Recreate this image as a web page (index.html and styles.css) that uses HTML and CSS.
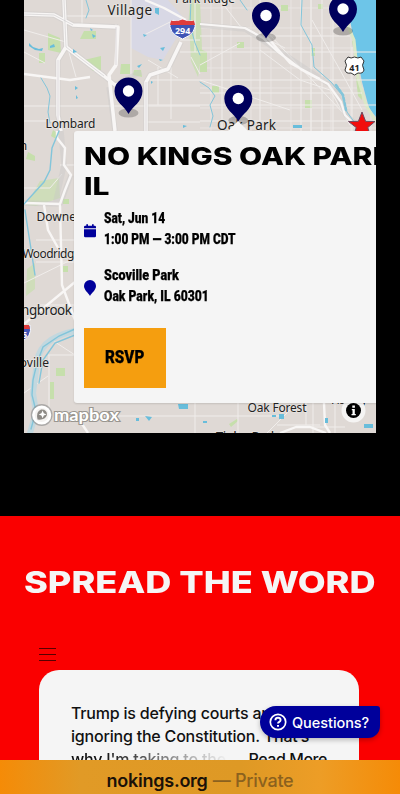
FILE: index.html
```html
<!DOCTYPE html>
<html lang="en">
<head>
<meta charset="utf-8">
<meta name="viewport" content="width=device-width, initial-scale=1">
<title>No Kings</title>
<link rel="stylesheet" href="styles.css">
</head>
<body>
<div class="screen">
  <section class="map-section">
    <div class="map">
      <svg class="map-canvas" viewBox="24 0 352 433" width="352" height="433">
        <defs>
          <g id="pin">
            <ellipse cx="0" cy="-1" rx="10" ry="4.500" fill="#000" opacity=".22"/>
            <path d="M0 0C-4-8-14-12-14-23A14 13.600 0 0 1 14-23C14-12 4-8 0 0Z" fill="#00005c"/>
            <circle cx="0" cy="-23" r="5.700" fill="#fff"/>
          </g>
          <pattern id="streets" width="20" height="20" patternUnits="userSpaceOnUse">
            <path d="M0 8H20M11 0V20" stroke="#ebe7e4" stroke-width=".8" fill="none"/>
          </pattern>
        </defs>
        <rect x="24" width="352" height="433" fill="#dfd9d5"/>
        <rect x="200" width="176" height="131" fill="url(#streets)"/>
        <path d="M131 0H168L188 23 180 32 163 60 148 57 131 48Z" fill="#d8d8e5"/>
        <g fill="#c6dfac">
          <path d="M48 33l12 5 1 15-13-3zM39 53h6v10h-6zM84 31h12v8H80zM84 60l17-4v14l-8 1zM121 64h9v10h-10zM134 70h7l1 7-9-2zM53 130l6 4-3 5-5-3zM28 152l7 4v5l-9-2z"/>
          <path d="M190 0h10l2 49-4 28-7-16-1-20-2-13z" opacity=".75"/>
          <path d="M200 49l7 3v20h-7zM237 42h7v6h-7zM281 5h7v6h-7zM318 4h5v5h-5zM305 100h7v8h-7zM212 86h7v7h-7zM311 48h4v8h-4zM352 41l8 2-1 4-6-1zM356 78l5 2 1 20-4-4zM63 199h6v5h-6zM63 266h5v6h-5zM56 368h9v8h-9zM50 382h4v17h-4zM229 424l8-5 1 2-7 6z"/>
          <path d="M40 181l19-3 1 20-24 8-10-1zM27 269l8-6v26l-9 7z" opacity=".65"/>
        </g>
        <path d="M346 0H376V117L369 108 362 82 356 51Z" fill="#6dc5e8"/>
        <path d="M347 24L354 40 358 78 366 105 376 122" fill="none" stroke="#dbe8c7" stroke-width="3"/>
        <g fill="none" stroke="#f0edeb" stroke-width="1">
          <path d="M24 30L66 42 76 77M24 52L45 63M64 16H130M82 0V24M116 24V68M131 0V100M24 106H200M24 121H75M24 188H50L62 174M60 165H75M38 219H75M36 240H75M36 262H75M38 305H75M48 355H75M49 355V420M158 67V105M171 67V119M147 80H376M144 122H200M147 105H376M148 60L178 78M191 57L200 74M180 40H200M180 52H376M195 0V52M222 0V131M260 0V131M301 0V131M333 0V131M352 47V131M200 65L240 43M200 80L290 110M311 0V131M322 0V131M200 36H350M200 121H376M200 93H362M78 416H220M220 416H280M238 403V433M267 433L294 406M306 403V425M300 427H345M335 403V433M195 403V433M277 425H320M24 283L75 258M24 393L48 376M52 340L75 355M313 403V433M144 35L174 20"/>
          <path d="M312 20L340 70 362 110M260 50L300 80 330 90 350 125M270 35L345 115M220 0L240 26 285 48"/>
        </g>
        <g fill="none" stroke="#c9c7c9" stroke-width="5.400" stroke-linejoin="round" opacity=".4">
          <path d="M64 0L66 47 104 76 115 85 141 72M66 47L58 60 58 115 61 131M146 131V82L150 75 168 69 181 42M109 87L115 131M24 14L54 15 73 25 118 27M200 25L245 29 285 55 335 88 346 115 360 128M24 203L60 204 71 175M61 131L64 165 55 205"/>
        </g>
        <g fill="none" stroke="#f8f6f5" stroke-width="3.500" stroke-linejoin="round">
          <path d="M64 0L66 47 104 76 115 85 120 84M66 47L58 60 58 115 61 131M146 131V82L150 75 168 69 181 42M24 14L54 15 73 25 118 27L116 65 109 75 115 131"/>
          <path d="M24 74L70 80 90 77M186 20L164 8 145 0M24 203L60 204 65 190 71 175 64 165 65 148 57 138V131M60 205L62 285 75 320M44 205L48 230 62 255M24 324L75 282M280 433L296 427 310 427 326 433M80 421L88 433M324 403L325 425 330 433" stroke-width="2.400"/>
          <path d="M200 24L245 28 263 38 277 51 302 70 328 84 341 102 345 115 360 130M267 37L290 63 320 79" stroke-width="2.200"/>
        </g>
        <g fill="none" stroke="#c9c7c9" stroke-width=".7" opacity=".8">
          <path d="M64 0L66 47 104 76M58 60V131M146 131V82M116 27V65M24 14L54 15 73 25"/>
        </g>
        <g fill="none" stroke="#83c5da" stroke-width="1.400" stroke-linecap="round">
          <path d="M86 0L89 10 86 18M41 78L47 88 50 96 48 112 50 123M191 0L190 25 195 43 200 55M302 0L301 25 312 45 314 67 331 82 342 95 347 112 360 130M240 0L247 10M200 82L209 88 215 96 210 105 213 116 210 127" stroke-width="1"/>
          <path d="M59 131L52 148 50 170 44 182 24 204M25 210L28 230 31 249 35 275"/>
          <path d="M75 331Q36 338 36 370L33 393 36 412 30 433" stroke="#c2d8df" stroke-width="6"/>
          <path d="M75 329L59 336 43 347 37 363 33 380 32 395 36 411 31 429M75 335L55 343 43 360 39 383"/>
          <path d="M336 85l7 10 3 15" stroke-dasharray="3 2" stroke-width="2.500"/>
        </g>
        <g fill="#68bddb">
          <path d="M29 43l4 4 6 2 4-1-1 3-7-1-6-4zM50 46l4-2 1 3-5 1zM90 28l3 2-2 1zM92 34l4 2-3 2zM73 49l4 3-4 1zM143 34l4 1-3 2zM160 48l5-1-2 4zM159 59l4 1-3 1zM137 66l5-2-3 4zM75 86l3 2-3 2zM76 95l2 3-2 1zM151 81l2 1-2 2zM183 125l4 1-4 2zM155 8h4v7l-4-2zM293 125h9v3h-9zM178 404h10v5h-9zM145 416l7 1-3 4zM136 418h3v3h-3zM203 421h4v2h-4zM279 414h5v5h-5zM325 418h3v5h-3zM364 424h9v4h-9zM272 415h4v2h-4z"/>
        </g>
        <g class="map-labels">
          <text x="107.500" y="15" textLength="44.500">Village</text>
          <text x="175" y="2.500" textLength="60" class="small">Park Ridge</text>
          <text x="45.500" y="128" textLength="50" class="small">Lombard</text>
          <text x="217" y="130" textLength="59">Oak Park</text>
          <text x="36.500" y="220.500" class="small">Downers</text>
          <text x="22.500" y="258" class="small" textLength="58">Woodridge</text>
          <text x="-1" y="315" textLength="73">Bolingbrook</text>
          <text x="-13" y="367" class="small" textLength="62">Romeoville</text>
          <text x="12.500" y="149.500" class="small">on</text>
          <text x="247.500" y="411.500" class="small" textLength="59">Oak Forest</text>
          <text x="216" y="441.500" textLength="62">Tinley Park</text>
          <text x="331" y="404" class="small" textLength="36">Harvey</text>
        </g>
        <path d="M170.500 21Q176 22 182.500 19.500Q189 22 194.500 21Q198 33 182.500 39Q167 33 170.500 21Z" fill="#4054b5" stroke="#fff" stroke-width="1"/>
        <path d="M171 20.500Q176 22 182.500 19.500Q189 22 194 20.500L195 25H170Z" fill="#df3c3c"/>
        <text x="182.700" y="33.500" class="shield light">294</text>
        <path d="M12 325Q18 327 23 325Q28 327 30 325Q33 337 20 342" fill="#4054b5" stroke="#fff"/>
        <path d="M18 325H29L30 329H18Z" fill="#df3c3c"/>
        <text x="22" y="338" class="shield light">55</text>
        <path d="M348 57Q351 59 354.500 57Q358 59 361 57L364 61Q361 65 364 70Q363 74 358 73L354.500 75L351 73Q346 74 345 70Q348 65 345 61Z" fill="#fff" stroke="#333"/>
        <text x="354.500" y="70.500" class="shield">41</text>
        <path d="M362 112L365.600 121.300 375 121.500 367.800 127.500 370.500 137 362 131.500 353.500 137 356.200 127.500 348.500 121.500 358.400 121.300Z" fill="#f20d0d" stroke="#6c4a61" stroke-width="1"/>
        <use href="#pin" x="128.500" y="114"/>
        <use href="#pin" x="266" y="38.500"/>
        <use href="#pin" x="343" y="32"/>
        <use href="#pin" x="238.300" y="121.500"/>
        <g>
          <circle cx="41.700" cy="415" r="9.400" fill="none" stroke="#888" stroke-width="3" opacity=".6"/>
          <circle cx="41.700" cy="415" r="8.300" fill="#f4f2f0" stroke="#fff" stroke-width="2.600"/>
          <path d="M37.500 419.500Q35.500 412 41 409.500Q47 409 47 415Q45 420.500 37.500 419.500Z" fill="#8d8a85"/>
          <path d="M42.600 410.500l1.200 2.700 2.700 1.200-2.700 1.200-1.200 2.700-1.200-2.700-2.700-1.200 2.700-1.200z" fill="#fff"/>
          <text x="54" y="420.500" class="logo" textLength="65" lengthAdjust="spacingAndGlyphs">mapbox</text>
        </g>
        <circle cx="353.500" cy="410.500" r="12" fill="#f5f4f3"/>
        <circle cx="353.500" cy="410.500" r="7.500" fill="#000"/>
        <path d="M352.300 405.500h2.600v2.300h-2.600zM351.800 409h3v5h1v1.300h-4.300V414h1v-3.700h-.7z" fill="#fff"/>
      </svg>
      <article class="popup">
        <h2><span class="wide">NO KINGS OAK PARK,</span><span class="wide">IL</span></h2>
        <div class="detail">
          <svg class="calendar" width="12" height="14" viewBox="0 0 12 14"><path d="M0 5.200H12V12Q12 13.300 10.700 13.300H1.300Q0 13.300 0 12ZM0 4.300V3Q0 1.800 1.300 1.800H2.300V.3H4V1.800H8V.3H9.700V1.800H10.700Q12 1.800 12 3V4.300Z" fill="#00009b"/></svg>
          <p><span class="narrow">Sat, Jun 14</span><span class="narrow">1:00 PM — 3:00 PM CDT</span></p>
        </div>
        <div class="detail">
          <svg class="place" width="12" height="16" viewBox="0 0 12 16"><path d="M6 16C4.500 13 0 10 0 6A6 6 0 0 1 12 6C12 10 7.500 13 6 16Z" fill="#00009b"/></svg>
          <p><span class="narrow n-place">Scoville Park</span><span class="narrow n-city">Oak Park, IL 60301</span></p>
        </div>
        <a class="rsvp"><span class="narrow">RSVP</span></a>
      </article>
    </div>
  </section>
  <section class="spread">
    <h1><span class="wide">SPREAD THE WORD</span></h1>
    <div class="menu"><i></i><i></i><i></i></div>
    <div class="message">
      <p class="l1">Trump is defying courts and</p>
      <p class="l2">ignoring the Constitution. That’s</p>
      <p class="l3"><span class="fade">why I'm taking to the</span><span>Read More</span></p>
    </div>
  </section>
  <a class="questions">
    <svg width="18" height="18" viewBox="0 0 18 18" fill="none" stroke="#fff" stroke-width="1.700"><circle cx="9" cy="9" r="7.700"/><path d="M6.400 7.200Q6.500 4.800 9 4.800T11.600 7Q11.600 8.200 10.300 8.900T9 10.600" stroke-width="1.900"/><path d="M9 11.900V13.700" stroke-width="2"/></svg>
    <span>Questions?</span>
  </a>
  <footer class="address"><b>nokings.org</b><span>— Private</span></footer>
</div>
</body>
</html>
```
FILE: styles.css
```css
* { box-sizing: border-box; }
body { margin: 0; background: #000; font-family: Inter, sans-serif; }
h1, h2, p { margin: 0; }
.screen { position: relative; width: 400px; height: 794px; overflow: hidden; }
.map-section { height: 516px; padding: 0 24px; background: #000; }
.map { position: relative; width: 352px; height: 433px; overflow: hidden; }
.map-canvas { display: block; }
.map-labels text {
  font: 400 13.500px "Noto Sans", sans-serif;
  fill: #222;
  stroke: #e8e4e1;
  stroke-width: 1.500px;
  paint-order: stroke;
}
.map-labels .small { font-size: 12px; }
.shield { font: 700 9px "Noto Sans", sans-serif; text-anchor: middle; fill: #222; }
.shield.light { fill: #fff; }
.logo { font: 700 17px Lato, sans-serif; fill: #fff; stroke: #99958f; stroke-width: 2.200px; paint-order: stroke; }

.popup {
  position: absolute;
  left: 50px;
  top: 131px;
  width: 340px;
  height: 272px;
  padding: 10px;
  background: #f5f5f5;
  border-radius: 3px;
  box-shadow: 0 1px 2px rgba(0, 0, 0, .12);
}
.popup::before {
  content: "";
  position: absolute;
  left: 154px;
  top: -10px;
  border: 10px solid transparent;
  border-top: 0;
  border-bottom-color: #f5f5f5;
}
.popup h2 { font-weight: 850; font-size: 24px; line-height: 30px; position: relative; top: .5px; }
.wide, .narrow { display: block; width: max-content; white-space: nowrap; transform-origin: left center; }
.wide { transform: scaleX(1.248); }
.detail { display: flex; align-items: center; gap: 8px; height: 42px; margin-top: 7px; }
.detail + .detail { margin-top: 15px; }
.calendar { margin-top: 4px; }
.place { margin-top: 4px; }
.narrow { font: 900 15px/21px Roboto, sans-serif; transform: scaleX(.795); -webkit-text-stroke: .25px #000; }
.n-place { transform: scaleX(.84); }
.n-city { transform: scaleX(.81); }
.rsvp {
  display: flex;
  align-items: center;
  justify-content: center;
  width: 82px;
  height: 60px;
  margin-top: 21px;
  padding-bottom: 3px;
  background: #f59e0f;
}
.rsvp .narrow { font-size: 19px; transform: scaleX(.8); transform-origin: center; }

.spread { height: 278px; background: #fa0000; padding-top: 47px; }
.spread h1 { padding-left: 24px; color: #f5f5f5; font-weight: 800; font-size: 29.500px; line-height: 38px; }
.spread h1 .wide { transform: scaleX(1.225); }
.menu { display: flex; flex-direction: column; gap: 5px; width: 17px; margin: 47px 0 0 39px; }
.menu i { height: 1px; background: #580000; }
.message {
  width: 320px;
  height: 200px;
  margin: 9px 0 0 39px;
  padding: 31.500px 32px 0;
  border-radius: 20px;
  background: #f5f5f5;
  color: #111;
  font-size: 16px;
  font-weight: 500;
  line-height: 23.300px;
  letter-spacing: -.2px;
  white-space: nowrap;
}
.l3 { display: flex; justify-content: space-between; }
.l3 span:last-child { letter-spacing: -.45px; }
.fade { background: linear-gradient(90deg, #111 20%, #eee 100%); -webkit-background-clip: text; background-clip: text; color: transparent; }
.questions {
  position: absolute;
  left: 260px;
  top: 706px;
  width: 119.500px;
  height: 32px;
  display: flex;
  align-items: center;
  gap: 5px;
  padding-left: 9px;
  border-radius: 16px 3px 12px 16px;
  background: #00009b;
  box-shadow: 0 2px 5px rgba(0, 0, 0, .25);
  color: #fff;
  font-size: 14.500px;
  font-weight: 500;
  letter-spacing: -.05px;
}
.address {
  position: absolute;
  left: 0;
  top: 760px;
  width: 400px;
  height: 34px;
  display: flex;
  justify-content: center;
  align-items: center;
  gap: 5px;
  padding-top: 6px;
  background: linear-gradient(90deg, #f58b07, #e19a26 20%, #de9925 60%, #ed9d26 80%, #f58b07);
  color: #1a1108;
  font-size: 18px;
  letter-spacing: -.25px;
}
.address b { font-weight: 600; }
.address span { color: #8b611e; font-weight: 500; }
```
